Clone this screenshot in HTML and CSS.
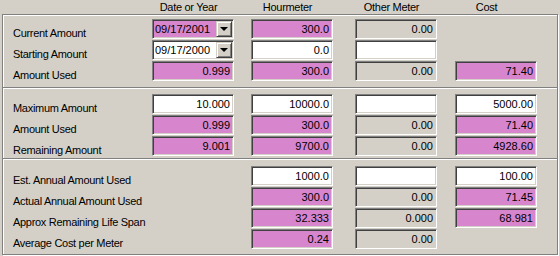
FILE: index.html
```html
<!DOCTYPE html>
<html lang="en">
<head>
    <meta charset="UTF-8">
    <title>Meter Usage</title>
    <link rel="stylesheet" href="styles.css">
</head>
<body>

    <div class="head">
        <div></div>
        <div class="hd">Date or Year</div>
        <div class="hd">Hourmeter</div>
        <div class="hd">Other Meter</div>
        <div class="hd cost">Cost</div>
    </div>

    <div class="frame">
        <!-- Текущие значения -->
        <div class="section s1">
            <div class="label">Current Amount</div>
            <div class="combo pink"><span class="val">09/17/2001</span><span class="drop"></span></div>
            <div class="field pink">300.0</div>
            <div class="field ro">0.00</div>
            <div></div>

            <div class="label">Starting Amount</div>
            <div class="combo"><span class="val">09/17/2000</span><span class="drop"></span></div>
            <div class="field">0.0</div>
            <div class="field"></div>
            <div></div>

            <div class="label">Amount Used</div>
            <div class="field pink">0.999</div>
            <div class="field pink">300.0</div>
            <div class="field ro">0.00</div>
            <div class="field pink">71.40</div>
        </div>

        <!-- Лимиты -->
        <div class="section s2">
            <div class="label">Maximum Amount</div>
            <div class="field">10.000</div>
            <div class="field">10000.0</div>
            <div class="field"></div>
            <div class="field">5000.00</div>

            <div class="label">Amount Used</div>
            <div class="field pink">0.999</div>
            <div class="field pink">300.0</div>
            <div class="field ro">0.00</div>
            <div class="field pink">71.40</div>

            <div class="label">Remaining Amount</div>
            <div class="field pink">9.001</div>
            <div class="field pink">9700.0</div>
            <div class="field ro">0.00</div>
            <div class="field pink">4928.60</div>
        </div>

        <!-- Годовые значения -->
        <div class="section s3">
            <div class="label">Est. Annual Amount Used</div>
            <div></div>
            <div class="field">1000.0</div>
            <div class="field"></div>
            <div class="field">100.00</div>

            <div class="label">Actual Annual Amount Used</div>
            <div></div>
            <div class="field pink">300.0</div>
            <div class="field ro">0.00</div>
            <div class="field pink">71.45</div>

            <div class="label">Approx Remaining Life Span</div>
            <div></div>
            <div class="field pink">32.333</div>
            <div class="field ro">0.000</div>
            <div class="field pink">68.981</div>

            <div class="label">Average Cost per Meter</div>
            <div></div>
            <div class="field pink">0.24</div>
            <div class="field ro">0.00</div>
            <div></div>
        </div>
    </div>

</body>
</html>
```

FILE: styles.css
```css
* {
    box-sizing: border-box;
    margin: 0;
    padding: 0;
}

body {
    font-family: 'Liberation Sans', Arial, sans-serif;
    font-size: 11px;
    color: #000;
    background-color: #d4d0c8;
    width: 560px;
    height: 256px;
    overflow: hidden;
}

.head,
.section {
    display: grid;
    grid-template-columns: 149px 99px 104px 100px 82px;
}

.head {
    height: 14px;
    line-height: 14px;
    margin-left: 3px;
}

.hd {
    width: 82px;
    text-align: center;
    padding-right: 9px;
    letter-spacing: -0.3px;
    white-space: nowrap;
}

.hd.cost {
    padding-right: 19px;
}

.frame {
    margin-left: 2px;
    width: 556px;
    height: 241px;
    border: 1px solid #808080;
    border-top: none;
    box-shadow: inset 1px 0 #fff, 1px 1px 0 #fff;
}

.section {
    grid-auto-rows: 20px;
    row-gap: 1px;
    border-top: 1px solid #808080;
    box-shadow: inset 1px 1px #fff;
}

.s1 {
    padding: 4px 0 6px;
}

.s2 {
    padding: 6px 0 2px;
}

.s3 {
    padding: 7px 0 0;
}

.label {
    padding: 8px 0 0 10px;
    line-height: 12px;
    letter-spacing: -0.3px;
    white-space: nowrap;
}

/* Поля ввода в стиле Windows */
.field,
.combo {
    width: 82px;
    height: 20px;
    border: 1px solid;
    border-color: #808080 #fff #fff #808080;
    box-shadow: inset 1px 1px #404040, inset -1px -1px #d4d0c8;
    background-color: #fff;
}

.field {
    text-align: right;
    padding: 1px 3px 0 0;
    line-height: 17px;
}

.field.pink,
.combo.pink .val {
    background-color: #d786ce;
}

.field.ro {
    background-color: #d4d0c8;
}

.combo {
    display: flex;
    padding: 1px;
}

.combo .val {
    flex: 1;
    padding: 1px 0 0 1px;
    line-height: 15px;
}

.drop {
    width: 16px;
    height: 16px;
    background-color: #d4d0c8;
    border: 1px solid;
    border-color: #d4d0c8 #404040 #404040 #d4d0c8;
    box-shadow: inset 1px 1px #fff, inset -1px -1px #808080;
    position: relative;
}

.drop::after {
    content: "";
    position: absolute;
    left: 3px;
    top: 5px;
    border-left: 4px solid transparent;
    border-right: 4px solid transparent;
    border-top: 4px solid #000;
}
```
